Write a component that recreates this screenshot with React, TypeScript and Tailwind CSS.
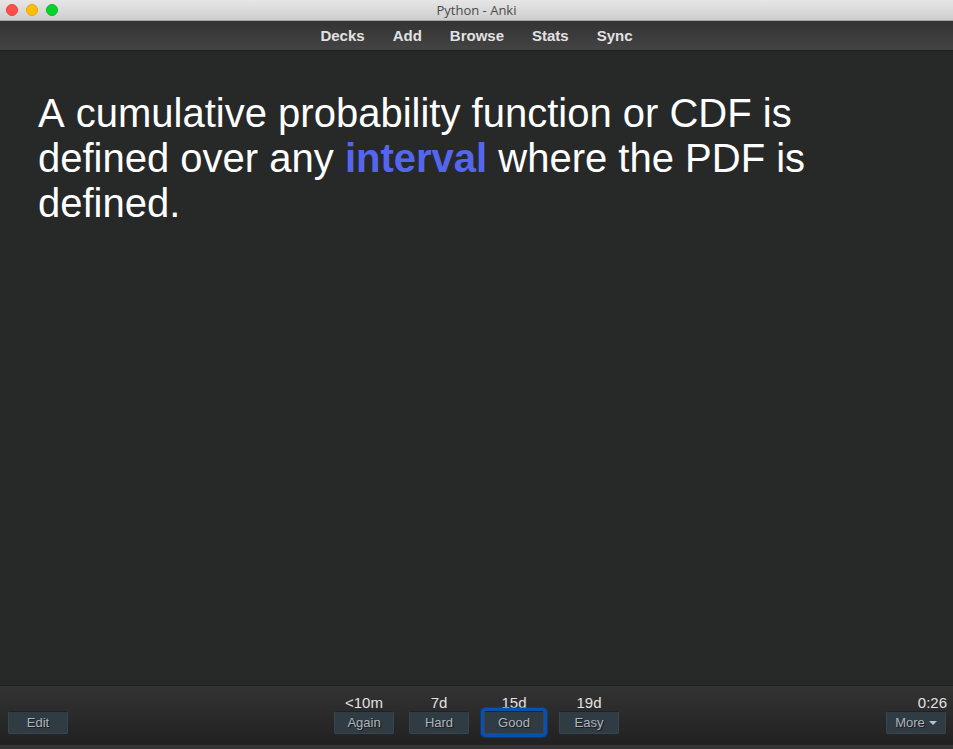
const navItems = ['Decks', 'Add', 'Browse', 'Stats', 'Sync'];

const answers = [
  { label: 'Again', interval: '<10m', focused: false },
  { label: 'Hard', interval: '7d', focused: false },
  { label: 'Good', interval: '15d', focused: true },
  { label: 'Easy', interval: '19d', focused: false },
];

const buttonStyle =
  'flex h-[23px] w-[60px] items-center justify-center rounded-[2px] border border-[#394650] border-t-[#1c242a] bg-[#303c44] text-[13px] leading-4 text-[#adb5ba] [text-shadow:1px_1px_1px_#14191c] outline-none';

function TitleBar() {
  return (
    <header className="grid h-[21px] shrink-0 grid-cols-[1fr_auto_1fr] items-center border-b border-[#a5a7a7] bg-linear-to-b from-[#e6e6e6] to-[#cecece] px-1.5">
      <div className="flex gap-2">
        <button aria-label="Close" className="size-3 rounded-full border border-[#e8413b] bg-[#ff4f48]" />
        <button aria-label="Minimize" className="size-3 rounded-full border border-[#e5a50c] bg-[#ffbe06]" />
        <button aria-label="Zoom" className="size-3 rounded-full border border-[#0eb724] bg-[#04d42c]" />
      </div>
      <h1 className="font-['Open_Sans',sans-serif] text-[13px] leading-4 text-[#4a4a4a]">Python - Anki</h1>
    </header>
  );
}

function Toolbar() {
  return (
    <nav className="flex h-[30px] shrink-0 items-center justify-center gap-7 border-b border-[#1d1d1d] bg-linear-to-b from-[#333333] to-[#444444] text-[15px] leading-5 font-bold text-[#e2e2e2]">
      {navItems.map((item) => (
        <a key={item} href="#">
          {item}
        </a>
      ))}
    </nav>
  );
}

function AnswerBar() {
  return (
    <footer className="grid shrink-0 grid-cols-[1fr_auto_1fr] items-end border-t border-[#1d1f1e] border-b-4 border-b-[#343434] bg-linear-to-b from-[#333333] to-[#212121] px-2 pt-2 pb-[11px]">
      <button className={buttonStyle}>Edit</button>
      <div className="flex gap-[15px]">
        {answers.map(({ label, interval, focused }) => (
          <div key={label} className="flex w-[60px] flex-col items-center">
            <span className="h-[17px] text-[15px] leading-[18px] text-[#e2e2e2]">{interval}</span>
            <button
              className={
                focused
                  ? `${buttonStyle} shadow-[0_0_0_3px_#0b51ab,0_0_1px_4px_#0b51ab80]`
                  : buttonStyle
              }
            >
              {label}
            </button>
          </div>
        ))}
      </div>
      <div className="-mr-0.5 flex flex-col items-end">
        <time className="h-[17px] text-[15px] leading-[18px] text-[#e2e2e2]">0:26</time>
        <button className={`${buttonStyle} mr-px gap-1`}>
          More
          <svg width="8" height="4" viewBox="0 0 8 4" aria-hidden="true">
            <path d="M0 0h8L4 4z" fill="#bac2c6" />
          </svg>
        </button>
      </div>
    </footer>
  );
}

export default function App() {
  return (
    <div className="flex h-screen flex-col overflow-hidden bg-[#272828] font-['Liberation_Sans',Arial,sans-serif]">
      <TitleBar />
      <Toolbar />
      <main className="min-h-0 flex-1 overflow-auto px-[38px] pt-10">
        <p className="text-[40px] leading-[45px] text-white [font-kerning:none]">
          A cumulative probability function or CDF is defined over any{' '}
          <strong className="font-bold text-[#5566ee]">interval</strong> where the PDF is defined.
        </p>
      </main>
      <AnswerBar />
    </div>
  );
}
